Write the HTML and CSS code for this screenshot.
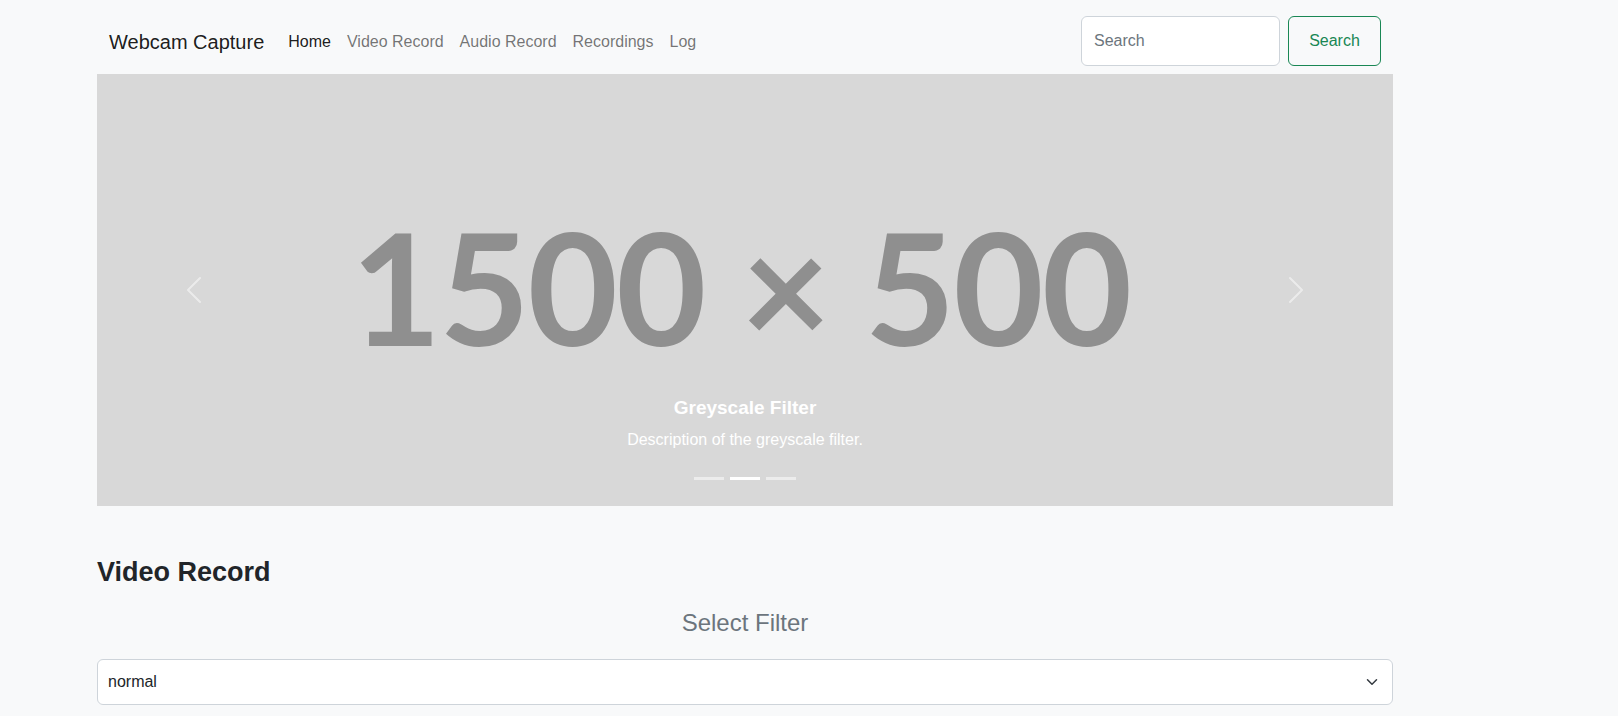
FILE: index.html
```html
<!DOCTYPE html>
<html lang="en">
<head>
<meta charset="utf-8">
<title>Webcam Capture</title>
<link rel="stylesheet" href="styles.css">
</head>
<body>
<div class="page">
  <nav class="navbar">
    <a class="brand" href="#">Webcam Capture</a>
    <ul class="nav">
      <li><a class="nav-link active" href="#">Home</a></li>
      <li><a class="nav-link" href="#">Video Record</a></li>
      <li><a class="nav-link" href="#">Audio Record</a></li>
      <li><a class="nav-link" href="#">Recordings</a></li>
      <li><a class="nav-link" href="#">Log</a></li>
    </ul>
    <form class="search">
      <input class="search-input" type="search" placeholder="Search">
      <button class="search-btn" type="button">Search</button>
    </form>
  </nav>

  <div class="carousel">
    <div class="slide"><span class="slide-text">1500 × 500</span></div>
    <button class="control control-prev" type="button" aria-label="Previous">
      <svg class="control-icon" viewBox="0 0 16 16" fill="#fff"><path d="M11.354 1.646a.5.5 0 0 1 0 .708L5.707 8l5.647 5.646a.5.5 0 0 1-.708.708l-6-6a.5.5 0 0 1 0-.708l6-6a.5.5 0 0 1 .708 0z"/></svg>
    </button>
    <button class="control control-next" type="button" aria-label="Next">
      <svg class="control-icon" viewBox="0 0 16 16" fill="#fff"><path d="M4.646 1.646a.5.5 0 0 1 .708 0l6 6a.5.5 0 0 1 0 .708l-6 6a.5.5 0 0 1-.708-.708L10.293 8 4.646 2.354a.5.5 0 0 1 0-.708z"/></svg>
    </button>
    <div class="caption">
      <h5 class="caption-title">Greyscale Filter</h5>
      <p class="caption-text">Description of the greyscale filter.</p>
    </div>
    <div class="indicators">
      <span class="indicator"></span>
      <span class="indicator active"></span>
      <span class="indicator"></span>
    </div>
  </div>

  <section class="video">
    <h3 class="section-title">Video Record</h3>
    <h4 class="filter-title">Select Filter</h4>
    <div class="select-wrap">
      <select class="filter-select">
        <option>normal</option>
        <option>greyscale</option>
        <option>sepia</option>
      </select>
      <svg class="select-chevron" viewBox="0 0 16 16"><path fill="none" stroke="#343a40" stroke-linecap="round" stroke-linejoin="round" stroke-width="2" d="m2 5 6 6 6-6"/></svg>
    </div>
  </section>
</div>
</body>
</html>
```

FILE: styles.css
```css
* {
  box-sizing: border-box;
}

html, body {
  margin: 0;
  padding: 0;
}

body {
  background: #f8f9fa;
  color: #212529;
  font-family: "Liberation Sans", Arial, sans-serif;
  font-size: 16px;
  line-height: 1.5;
  overflow: hidden;
}

.page {
  width: 1296px;
  margin-left: 97px;
}

/* Navbar */
.navbar {
  display: flex;
  align-items: center;
  height: 74px;
  padding: 16px 12px 8px;
}

.brand {
  font-size: 20px;
  line-height: 30px;
  color: rgba(0, 0, 0, 0.9);
  text-decoration: none;
  margin-right: 16px;
  padding: 6px 0 4px;
}

.nav {
  display: flex;
  list-style: none;
  margin: 0;
  padding: 0;
}

.nav-link {
  display: block;
  padding: 9px 8px 7px;
  color: rgba(0, 0, 0, 0.55);
  text-decoration: none;
  line-height: 24px;
}

.nav-link.active {
  color: rgba(0, 0, 0, 0.9);
}

.search {
  display: flex;
  gap: 8px;
  margin: 0 0 0 auto;
}

.search-input {
  width: 199px;
  height: 50px;
  padding: 0 12px;
  border: 1px solid #ced4da;
  border-radius: 6px;
  background: #fff;
  font: inherit;
  color: #212529;
}

.search-input::placeholder {
  color: #6c757d;
}

.search-btn {
  width: 93px;
  height: 50px;
  border: 1px solid #198754;
  border-radius: 6px;
  background: transparent;
  color: #198754;
  font: inherit;
  padding: 0;
}

/* Carousel */
.carousel {
  position: relative;
  width: 1296px;
  height: 432px;
  background: #d8d8d8;
  overflow: hidden;
}

.slide {
  display: flex;
  align-items: center;
  justify-content: center;
  height: 100%;
  padding: 0 9px 9px 0;
}

.slide-text {
  font-family: Lato, "Liberation Sans", sans-serif;
  font-weight: 700;
  font-size: 156px;
  line-height: 1.2;
  letter-spacing: -2px;
  color: #8f8f8f;
  white-space: nowrap;
}

.control {
  position: absolute;
  top: 0;
  bottom: 0;
  width: 15%;
  display: flex;
  align-items: center;
  justify-content: center;
  background: none;
  border: 0;
  padding: 0;
  opacity: 0.5;
}

.control-prev {
  left: 0;
}

.control-next {
  right: 0;
}

.control-icon {
  width: 32px;
  height: 32px;
}

.caption {
  position: absolute;
  left: 15%;
  right: 15%;
  bottom: 18px;
  padding: 20px 0;
  text-align: center;
  color: #fff;
}

.caption-title {
  margin: 0 0 8px;
  font-size: 19px;
  font-weight: 700;
  line-height: 24px;
}

.caption-text {
  margin: 0 0 16px;
  line-height: 24px;
}

.indicators {
  position: absolute;
  left: 0;
  right: 0;
  bottom: 0;
  display: flex;
  justify-content: center;
  margin-bottom: 16px;
}

.indicator {
  width: 30px;
  height: 3px;
  margin: 10px 3px;
  background: #fff;
  opacity: 0.5;
}

.indicator.active {
  opacity: 1;
}

/* Video section */
.video {
  padding-top: 50px;
}

.section-title {
  margin: 0 0 21px;
  font-size: 27px;
  font-weight: 700;
  line-height: 1.2;
  color: #212529;
}

.filter-title {
  margin: 0 0 21px;
  font-size: 24px;
  font-weight: 400;
  line-height: 1.2;
  text-align: center;
  color: #6c757d;
}

.select-wrap {
  position: relative;
}

.filter-select {
  display: block;
  width: 100%;
  height: 46px;
  padding: 0 36px 0 10px;
  border: 1px solid #ced4da;
  border-radius: 6px;
  background: #fff;
  font: inherit;
  color: #212529;
  appearance: none;
  -webkit-appearance: none;
}

.select-chevron {
  position: absolute;
  right: 13px;
  top: 50%;
  width: 16px;
  height: 12px;
  margin-top: -6px;
  pointer-events: none;
}
```
